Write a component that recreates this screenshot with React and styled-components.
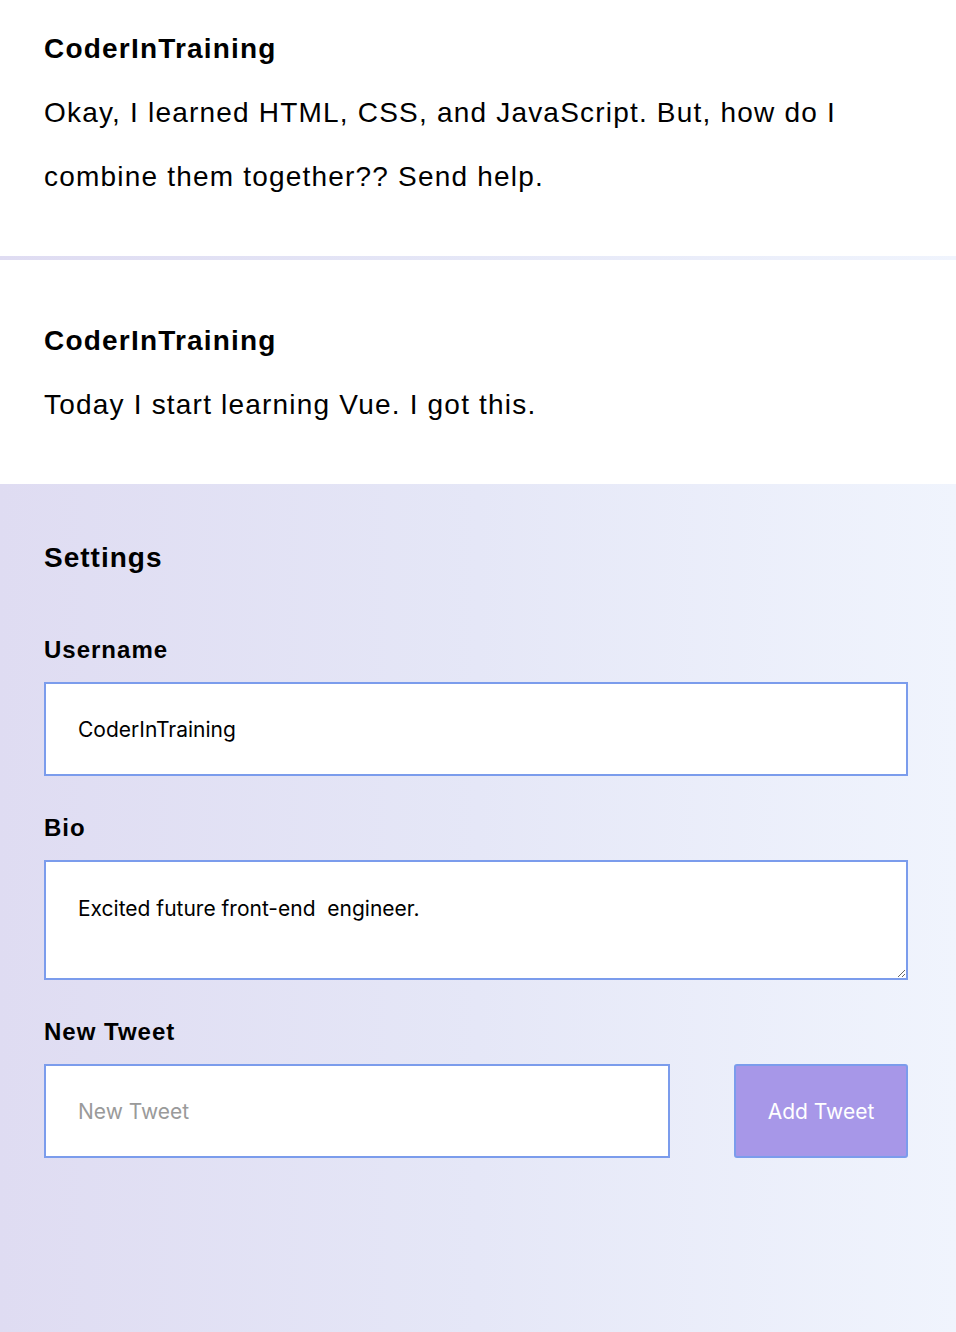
import React from 'react'
import styled, { createGlobalStyle } from 'styled-components'

const GlobalStyle = createGlobalStyle`
  html, body {
    margin: 0;
    padding: 0;
    background: #ffffff;
  }
  body {
    font-family: "Liberation Sans", Arial, sans-serif;
    color: #000;
  }
`

const gradient = 'linear-gradient(90deg, #dfdcf2 0%, #e5e7f7 50%, #f0f4fd 100%)'

const Page = styled.div`
  min-height: 1332px;
  display: flex;
  flex-direction: column;
`

const Feed = styled.section`
  display: flex;
  flex-direction: column;
`

const Tweet = styled.article`
  padding: ${props => (props.first ? '33px' : '65px')} 44px 47px;
  background: #fff;
  border-bottom: ${props => (props.divider ? '4px solid transparent' : 'none')};
  border-image: ${props => (props.divider ? `${gradient} 1` : 'none')};
`

const Author = styled.h3`
  margin: 0 0 16px;
  font-size: 28px;
  line-height: 32px;
  font-weight: 700;
  letter-spacing: 1.2px;
`

const Body = styled.p`
  margin: 0;
  font-size: 28px;
  line-height: 64px;
  letter-spacing: 1.2px;
  max-width: 860px;
`

const Settings = styled.section`
  flex: 1;
  background: ${gradient};
  padding: 56px 48px 80px 44px;
  display: flex;
  flex-direction: column;
`

const Title = styled.h2`
  margin: 0 0 59px;
  font-size: 28px;
  line-height: 36px;
  font-weight: 700;
  letter-spacing: 1px;
`

const Label = styled.label`
  display: block;
  font-size: 24px;
  line-height: 30px;
  font-weight: 700;
  letter-spacing: 1px;
  margin-bottom: 17px;
`

const Field = styled.div`
  margin-bottom: 37px;
`

const inputBase = `
  box-sizing: border-box;
  width: 100%;
  border: 2px solid #7b9cec;
  background: #fff;
  font-family: Inter, "Liberation Sans", sans-serif;
  font-size: 21px;
  color: #000;
  outline: none;
  padding: 0 32px;
`

const TextInput = styled.input`
  ${inputBase}
  height: 94px;

  &::placeholder {
    color: #9a9a9a;
  }
`

const TextArea = styled.textarea`
  ${inputBase}
  display: block;
  height: 120px;
  padding-top: 33px;
  resize: vertical;
  line-height: 28px;
`

const Row = styled.div`
  display: flex;
  gap: 64px;
  align-items: stretch;
`

const TweetInput = styled(TextInput)`
  flex: 0 0 626px;
  width: 626px;
`

const AddButton = styled.button`
  flex: 1;
  height: 94px;
  border: 2px solid #7b9cec;
  border-radius: 3px;
  background: #a797e8;
  color: #fff;
  font-family: Inter, "Liberation Sans", sans-serif;
  font-size: 21px;
  cursor: pointer;
`

export default function App() {
  return (
    <Page>
      <GlobalStyle />
      <Feed>
        <Tweet first divider>
          <Author>CoderInTraining</Author>
          <Body>Okay, I learned HTML, CSS, and JavaScript. But, how do I combine them together?? Send help.</Body>
        </Tweet>
        <Tweet>
          <Author>CoderInTraining</Author>
          <Body>Today I start learning Vue. I got this.</Body>
        </Tweet>
      </Feed>
      <Settings>
        <Title>Settings</Title>
        <Field>
          <Label htmlFor="username">Username</Label>
          <TextInput id="username" defaultValue="CoderInTraining" />
        </Field>
        <Field>
          <Label htmlFor="bio">Bio</Label>
          <TextArea id="bio" defaultValue="Excited future front-end  engineer." />
        </Field>
        <Field>
          <Label htmlFor="tweet">New Tweet</Label>
          <Row>
            <TweetInput id="tweet" placeholder="New Tweet" />
            <AddButton>Add Tweet</AddButton>
          </Row>
        </Field>
      </Settings>
    </Page>
  )
}
